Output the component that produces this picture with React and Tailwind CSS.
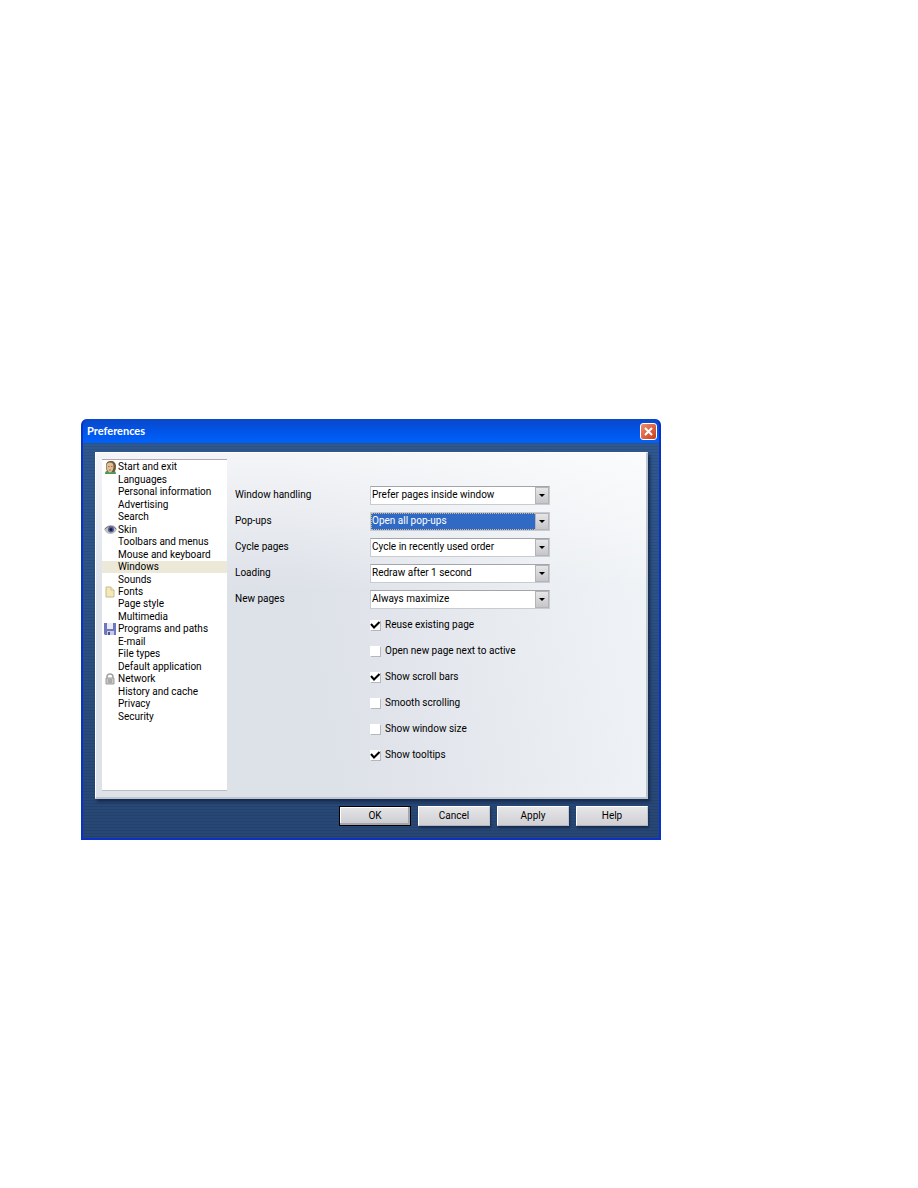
import { useState } from "react";

const sections = [
  { name: "Start and exit", icon: "user" },
  { name: "Languages" },
  { name: "Personal information" },
  { name: "Advertising" },
  { name: "Search" },
  { name: "Skin", icon: "eye" },
  { name: "Toolbars and menus" },
  { name: "Mouse and keyboard" },
  { name: "Windows" },
  { name: "Sounds" },
  { name: "Fonts", icon: "page" },
  { name: "Page style" },
  { name: "Multimedia" },
  { name: "Programs and paths", icon: "disk" },
  { name: "E-mail" },
  { name: "File types" },
  { name: "Default application" },
  { name: "Network", icon: "lock" },
  { name: "History and cache" },
  { name: "Privacy" },
  { name: "Security" },
];

const selects = [
  { id: "handling", label: "Window handling", value: "Prefer pages inside window" },
  { id: "popups", label: "Pop-ups", value: "Open all pop-ups", active: true },
  { id: "cycle", label: "Cycle pages", value: "Cycle in recently used order" },
  { id: "loading", label: "Loading", value: "Redraw after 1 second" },
  { id: "newpages", label: "New pages", value: "Always maximize" },
];

const options = [
  { label: "Reuse existing page", on: true },
  { label: "Open new page next to active", on: false },
  { label: "Show scroll bars", on: true },
  { label: "Smooth scrolling", on: false },
  { label: "Show window size", on: false },
  { label: "Show tooltips", on: true },
];

function SectionIcon({ name }) {
  if (name === "user") return (
    <svg viewBox="0 0 13 13" className="w-[13px] h-[13px]" aria-hidden="true">
      <path d="M1 13c0-3 2-4 5.500-4S12 10 12 13z" fill="#4d9a58" />
      <path d="M2 5C2 1 4 0 7 0s5 2 5 5.500S11 11 9 11H5C3 11 2 9 2 5z" fill="#6b5a3c" />
      <path d="M2.500 5c0-2 1-3.500 3.500-3.500S9.500 3 9.500 5.500 8 11.500 6 11.500 2.500 8 2.500 5z" fill="#e3bd93" />
      <path d="M4 5.500h1.500M7 5.500h1.500M5 9h2" stroke="#9a7452" />
    </svg>
  );
  if (name === "eye") return (
    <svg viewBox="0 0 13 9" className="w-[13px] h-[9px]" aria-hidden="true">
      <path d="M0 4.500C2 1.500 4 0 7 0s5 2 6 4.500C11 7.500 9 9 6.500 9S2 7.500 0 4.500z" fill="#c2bcbf" />
      <path d="M1 4C3 1 9 0 12 4" fill="none" stroke="#7a7176" />
      <circle cx="7" cy="4.500" r="3" fill="#4a5fa0" />
      <circle cx="7" cy="4.500" r="1.500" fill="#17202f" />
    </svg>
  );
  if (name === "page") return (
    <svg viewBox="0 0 10 12" className="w-[10px] h-3" aria-hidden="true">
      <path d="M1 1h5l3 3v7H1z" fill="#f3e8b8" stroke="#c9bc8c" />
      <path d="M6 1v3h3" fill="#fffbe6" stroke="#c9bc8c" />
    </svg>
  );
  if (name === "disk") return (
    <svg viewBox="0 0 12 12" className="w-3 h-3" aria-hidden="true">
      <path d="M0 0h12v12H1l-1-1z" fill="#7078bd" />
      <path d="M3 0h6v6H3z" fill="#e9ebf8" />
      <path d="M3 8h7v4H3z" fill="#c9cce6" />
      <path d="M4 9h2v3H4z" fill="#4b5293" />
    </svg>
  );
  if (name === "lock") return (
    <svg viewBox="0 0 10 12" className="w-[10px] h-3" aria-hidden="true">
      <path d="M2 6V4a3 3 0 0 1 6 0v2" fill="none" stroke="#a2a2a2" strokeWidth="1.500" />
      <path d="M1 5h8v6H1z" fill="#c9c9c9" stroke="#9c9c9c" />
      <path d="M3 7h4M3 9h4" stroke="#8d8d8d" />
    </svg>
  );
  return null;
}

function SelectRow({ id, label, value, active }) {
  return (
    <div className="flex h-[26px] items-center">
      <label htmlFor={id} className="w-[135px] shrink-0">{label}</label>
      <div className="relative w-[180px]">
        <select
          id={id}
          className={
            active
              ? "block h-[19px] w-full appearance-none border border-[#c8cbd0] bg-[#316ac5] pl-px text-white outline-1 -outline-offset-2 outline-dotted outline-[#d6b98a]"
              : "block h-[19px] w-full appearance-none border border-[#c8cbd0] border-t-[#a2a5aa] bg-white pl-px"
          }
        >
          <option>{value}</option>
        </select>
        <span className="pointer-events-none absolute inset-y-px right-px flex w-[14px] items-center justify-center border border-[#b4b4b8] bg-linear-to-b from-[#e6e6e8] to-[#c6c6ca]">
          <svg viewBox="0 0 6 3" className="h-[3px] w-[6px]" aria-hidden="true">
            <path d="M0 0h6L3 3z" />
          </svg>
        </span>
      </div>
    </div>
  );
}

function CheckRow({ label, on }) {
  const [checked, setChecked] = useState(on);
  return (
    <label className="ml-[135px] flex h-[26px] items-center gap-[5px]">
      <span className="relative flex">
        <input
          type="checkbox"
          checked={checked}
          onChange={() => setChecked(!checked)}
          className="h-[10px] w-[10px] appearance-none bg-white shadow-[1px_1px_0_#b4b8be]"
        />
        {checked && (
          <svg viewBox="0 0 10 10" className="pointer-events-none absolute inset-0 h-[10px] w-[10px]" aria-hidden="true">
            <path d="M1 4l3 3.500L9.500 2" fill="none" stroke="#000" strokeWidth="2" />
          </svg>
        )}
      </span>
      {label}
    </label>
  );
}

export default function App() {
  const [current, setCurrent] = useState("Windows");

  return (
    <main className="min-h-screen bg-white pt-[419px] pl-[81px] font-[Roboto,'Liberation_Sans',sans-serif] text-[10px] leading-3 text-black">
      <div className="max-w-[580px] rounded-t-md border-x-2 border-b-2 border-[#0831c8] bg-[#0831c8]">
        <header className="flex h-6 items-center justify-between rounded-t-md bg-linear-to-b from-[#0a48c8] via-[#0054e8] to-[#0062fa] pr-[2px] pl-1">
          <h1 className="font-[Lato,sans-serif] text-[11px] font-bold text-white">Preferences</h1>
          <button aria-label="Close" className="flex h-[17px] w-[17px] items-center justify-center rounded-[3px] border border-white bg-linear-to-br from-[#ee8c70] to-[#c93a14]">
            <svg viewBox="0 0 9 9" className="h-[9px] w-[9px]" aria-hidden="true">
              <path d="M1 1l7 7M8 1L1 8" stroke="#fff" strokeWidth="2" />
            </svg>
          </button>
        </header>

        <div className="bg-[repeating-linear-gradient(to_bottom,#00000014_0px,#00000014_1px,transparent_1px,transparent_3px),linear-gradient(to_bottom,#2f588f,#274674)] pt-[9px] pr-[11px] pb-3 pl-3">
          <div className="flex border-t border-r-2 border-b-2 border-l border-t-white border-r-[#bfc5ce] border-b-[#bfc5ce] border-l-white bg-[linear-gradient(to_bottom,#ffffffaa_0%,#ffffff00_40%),linear-gradient(80deg,#dde1e8_0%,#dde1e8_40%,#f1f4f7_100%)] p-[6px] shadow-[2px_3px_3px_#162c50]">
            <nav className="h-[332px] w-[125px] shrink-0 border-t border-b border-t-[#b5a5b5] border-b-[#b9bdc4] bg-white">
              <ul className="grid h-[263px] auto-rows-fr pt-[1px]">
                {sections.map((s) => (
                  <li key={s.name} className={s.name === current ? "bg-[#ece9d8]" : ""}>
                    <button
                      onClick={() => setCurrent(s.name)}
                      className="flex h-full w-full items-center text-left whitespace-nowrap"
                    >
                      <span className="flex w-4 shrink-0 justify-center">
                        <SectionIcon name={s.icon} />
                      </span>
                      {s.name}
                    </button>
                  </li>
                ))}
              </ul>
            </nav>

            <section className="grow pt-[23px] pl-2">
              {selects.map((s) => <SelectRow key={s.id} {...s} />)}
              {options.map((o) => <CheckRow key={o.label} {...o} />)}
            </section>
          </div>

          <div className="mt-[7px] flex justify-end gap-[7px]">
            {["OK", "Cancel", "Apply", "Help"].map((name) => (
              <button
                key={name}
                className={
                  name === "OK"
                    ? "h-5 w-[72px] border border-black bg-linear-to-b from-[#e6e6e9] to-[#c9cacf] shadow-[inset_-2px_-2px_0_#a5a7ad,inset_1px_1px_0_#fff]"
                    : "h-5 w-[72px] border border-t-white border-r-[#c4c5ca] border-b-[#b4b5ba] border-l-white bg-linear-to-b from-[#e6e6e9] to-[#d0d0d5] shadow-[1px_2px_2px_#162c50]"
                }
              >
                {name}
              </button>
            ))}
          </div>
        </div>
      </div>
    </main>
  );
}
